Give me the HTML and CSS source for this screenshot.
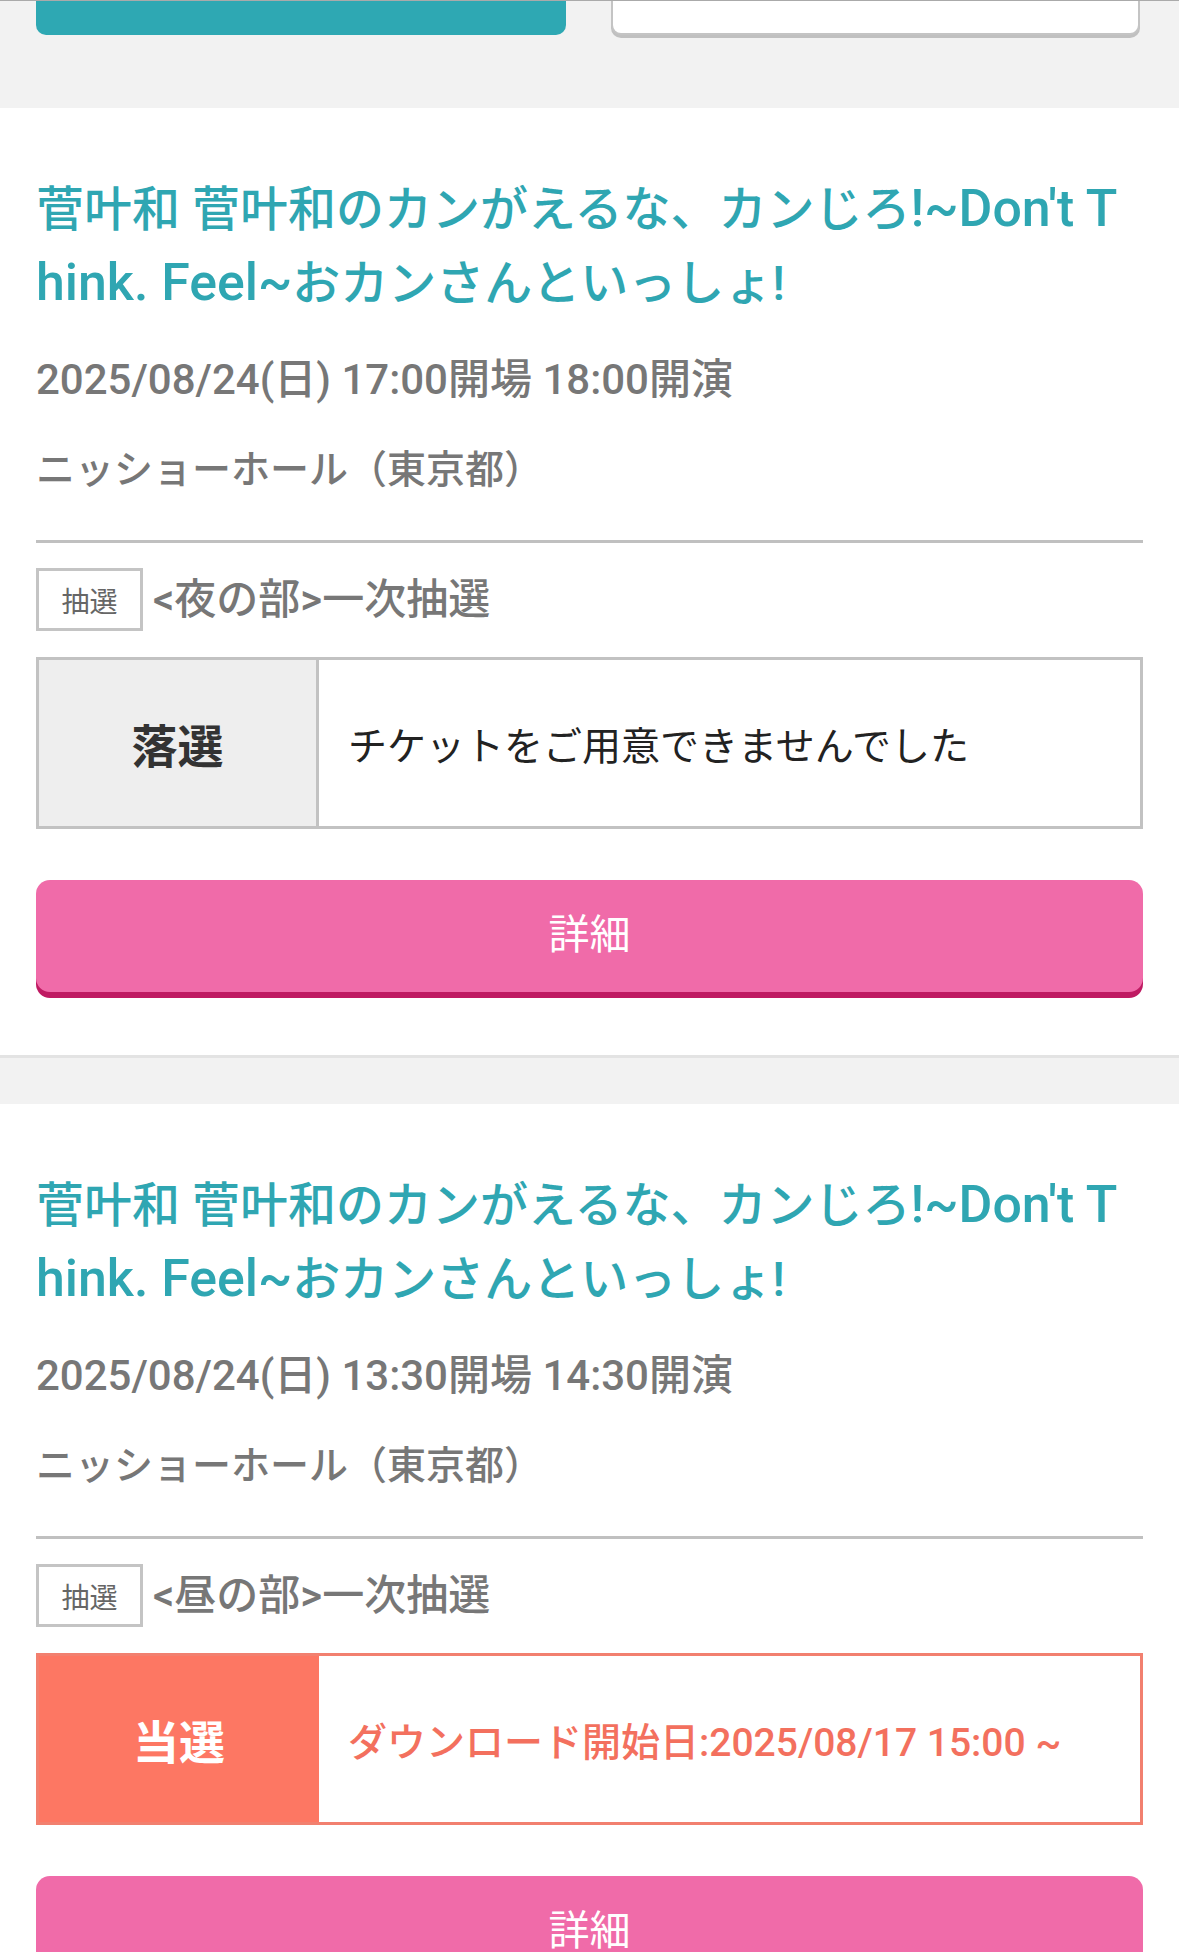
FILE: index.html
```html
<!DOCTYPE html>
<html lang="ja">
<head>
<meta charset="utf-8">
<link rel="stylesheet" href="styles.css">
</head>
<body>
<div class="top">
  <div class="btn-teal"></div>
  <div class="btn-white"></div>
</div>

<section class="card">
  <h2 class="title">菅叶和 菅叶和のカンがえるな、カンじろ<span class="en">!~Don't T</span><span class="en">hink. Feel~</span>おカンさんといっしょ!</h2>
  <p class="date">2025/08/24(日) 17:00開場 18:00開演</p>
  <p class="venue">ニッショーホール（東京都）</p>
  <div class="divider"></div>
  <div class="lottery">
    <span class="tag">抽選</span>
    <span class="lottery-name">&lt;夜の部&gt;一次抽選</span>
  </div>
  <div class="status status-lose">
    <div class="status-label">落選</div>
    <div class="status-text">チケットをご用意できませんでした</div>
  </div>
  <div class="detail-btn">詳細</div>
</section>

<section class="card">
  <h2 class="title">菅叶和 菅叶和のカンがえるな、カンじろ<span class="en">!~Don't T</span><span class="en">hink. Feel~</span>おカンさんといっしょ!</h2>
  <p class="date">2025/08/24(日) 13:30開場 14:30開演</p>
  <p class="venue">ニッショーホール（東京都）</p>
  <div class="divider"></div>
  <div class="lottery">
    <span class="tag">抽選</span>
    <span class="lottery-name">&lt;昼の部&gt;一次抽選</span>
  </div>
  <div class="status status-win">
    <div class="status-label">当選</div>
    <div class="status-text">ダウンロード開始日:2025/08/17 15:00 ~</div>
  </div>
  <div class="detail-btn">詳細</div>
</section>
</body>
</html>
```

FILE: styles.css
```css
* { box-sizing: border-box; }
html, body {
  margin: 0;
  padding: 0;
  background: #f2f2f2;
  font-family: Roboto, "Noto Sans CJK JP", "Noto Sans", sans-serif;
}
.top {
  display: flex;
  gap: 45px;
  padding: 0 39px 73px 36px;
  border-top: 1px solid #aaaaaa;
}
.btn-teal {
  width: 530px;
  height: 34px;
  background: #2ea8b3;
  border-radius: 0 0 10px 10px;
}
.btn-white {
  width: 529px;
  height: 34px;
  background: #fff;
  border: 2px solid #c4c4c4;
  border-top: none;
  border-radius: 0 0 10px 10px;
  box-shadow: 0 3px 0 #c0c0c0;
}
.card {
  background: #fff;
  padding: 64px 36px 63px;
  border-bottom: 3px solid #e3e3e3;
  margin-bottom: 46px;
}
.title {
  margin: 0;
  font-size: 48px;
  line-height: 73px;
  font-weight: 500;
  color: #2fa6b2;
  word-break: break-all;
}
.title .en {
  font-size: 1.08em;
}
.date, .venue {
  margin: 0;
  line-height: 64px;
  font-weight: 500;
  color: #777777;
}
.date {
  margin-top: 28px;
  font-size: 42px;
}
.venue {
  margin-top: 26px;
  font-size: 39px;
}
.divider {
  height: 3px;
  background: #c0c0c0;
  margin-top: 38px;
}
.lottery {
  display: flex;
  align-items: center;
  gap: 10px;
  margin-top: 25px;
}
.tag {
  width: 107px;
  height: 63px;
  border: 3px solid #c4c4c4;
  display: flex;
  align-items: center;
  justify-content: center;
  font-size: 28px;
  color: #666;
}
.lottery-name {
  font-size: 42px;
  line-height: 56px;
  font-weight: 500;
  color: #777777;
}
.status {
  display: flex;
  height: 172px;
  margin-top: 26px;
  border: 3px solid #c2c2c2;
}
.status-label {
  width: 280px;
  display: flex;
  align-items: center;
  justify-content: center;
  font-size: 46px;
  font-weight: 700;
}
.status-text {
  flex: 1;
  display: flex;
  align-items: center;
  padding-left: 29px;
  font-size: 39px;
}
.status-lose .status-label {
  background: #eeeeee;
  color: #333;
  border-right: 3px solid #c2c2c2;
}
.status-lose .status-text { color: #222; }
.status-win { border-color: #f2806f; }
.status-win .status-label {
  background: #fd7763;
  color: #fff;
}
.status-win .status-text {
  color: #f3705e;
  font-weight: 500;
}
.detail-btn {
  margin-top: 51px;
  height: 112px;
  padding-bottom: 10px;
  background: #f06ba9;
  border-radius: 14px;
  box-shadow: 0 6px 0 #bf1a62;
  color: #fff;
  font-size: 41px;
  display: flex;
  align-items: center;
  justify-content: center;
}
```
